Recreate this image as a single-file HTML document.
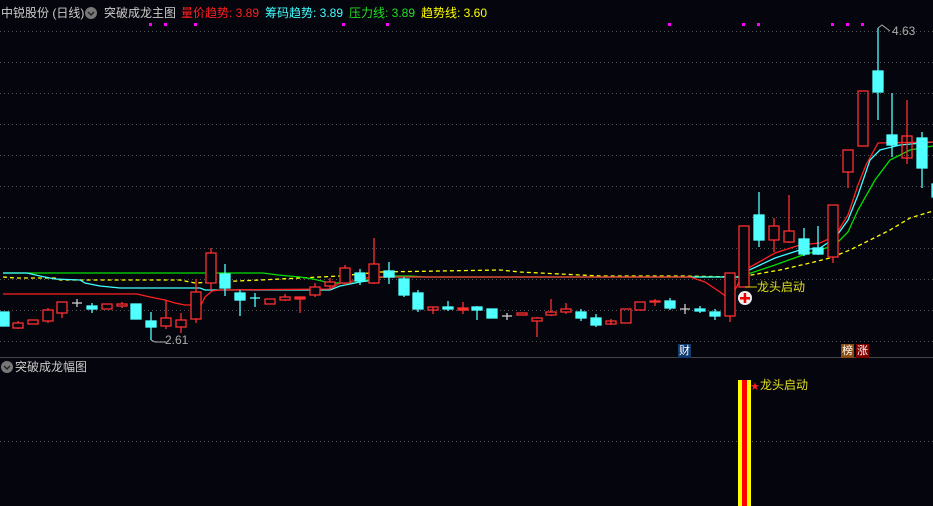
<!DOCTYPE html>
<html><head><meta charset="utf-8"><style>
html,body{margin:0;padding:0;background:#05050d;width:933px;height:506px;overflow:hidden}
.t{position:absolute;font-family:"Liberation Sans","Noto Sans CJK SC",sans-serif;font-size:12px;white-space:nowrap;line-height:14px}
</style></head><body>
<svg width="933" height="506" style="position:absolute;left:0;top:0" xmlns="http://www.w3.org/2000/svg">
<g stroke="#555" stroke-dasharray="1,3" stroke-width="1">
<line x1="0" y1="31.5" x2="933" y2="31.5"/><line x1="0" y1="62.5" x2="933" y2="62.5"/><line x1="0" y1="93.5" x2="933" y2="93.5"/>
<line x1="0" y1="124.5" x2="933" y2="124.5"/><line x1="0" y1="155.5" x2="933" y2="155.5"/><line x1="0" y1="186.5" x2="933" y2="186.5"/>
<line x1="0" y1="217.5" x2="933" y2="217.5"/><line x1="0" y1="248.5" x2="933" y2="248.5"/><line x1="0" y1="279.5" x2="933" y2="279.5"/>
<line x1="0" y1="310.5" x2="933" y2="310.5"/><line x1="0" y1="341.5" x2="933" y2="341.5"/><line x1="0" y1="441.5" x2="933" y2="441.5"/>
</g>
<line x1="0" y1="357.5" x2="933" y2="357.5" stroke="#444"/>
<g fill="#f0f">
<rect x="149" y="23" width="3" height="3"/><rect x="164" y="23" width="3" height="3"/><rect x="194" y="23" width="3" height="3"/><rect x="342" y="23" width="3" height="3"/><rect x="386" y="23" width="3" height="3"/>
<rect x="668" y="23" width="3" height="3"/><rect x="742" y="23" width="3" height="3"/><rect x="757" y="23" width="3" height="3"/><rect x="831" y="23" width="3" height="3"/><rect x="846" y="23" width="3" height="3"/><rect x="861" y="23" width="3" height="3"/>
</g>
<!-- lines -->
<polyline fill="none" stroke="#ffff00" stroke-width="1.3" stroke-dasharray="4,3" points="3,277 15,278 55,278 60,280 180,280 195,283 215,282 260,280 300,278 340,276 380,272 440,271 500,270 520,272 540,273 580,275 600,276 680,276 740,277 780,270 810,263 830,258 850,250 870,240 890,230 910,218 933,211"/>
<polyline fill="none" stroke="#00e000" stroke-width="1.3" points="3,273 263,273 278,275 300,277 313,279 330,283 355,283 375,278 395,276 410,276 425,277 740,277 745,275 775,265 800,256 820,250 835,245 848,232 858,210 875,180 890,160 910,150 933,146"/>
<polyline fill="none" stroke="#40ffff" stroke-width="1.3" points="3,273 27,273 40,276 55,279 80,280 85,283 100,286 120,288 200,288 205,290 330,290 340,286 360,282 375,280 380,277 425,277 740,277 745,272 775,258 800,250 820,248 835,238 848,220 858,195 870,160 880,150 900,145 933,142"/>
<polyline fill="none" stroke="#ff2020" stroke-width="1.3" points="3,294 137,294 150,297 165,300 175,303 185,305 195,305 200,307 205,297 212,291 220,290 330,289 340,283 360,280 370,277 395,277 690,277 705,282 720,292 728,298 735,290 745,270 775,253 800,245 820,243 835,236 848,215 858,185 866,165 878,143 933,142"/>
<!-- candles -->
<g stroke-width="1.3">
<g fill="#50ffff" stroke="#50ffff">
<rect x="0" y="312" width="9" height="14"/>
<line x1="77" y1="299" x2="77" y2="307" stroke="#ccc"/><line x1="72" y1="303" x2="82" y2="303" stroke="#ccc"/>
<rect x="87" y="306" width="10" height="3"/><line x1="92" y1="303" x2="92" y2="313"/>
<rect x="131" y="304" width="10" height="15"/>
<line x1="151" y1="312" x2="151" y2="340"/><rect x="146" y="321" width="10" height="6"/>
<line x1="225" y1="264" x2="225" y2="296"/><rect x="220" y="274" width="10" height="14"/>
<line x1="240" y1="290" x2="240" y2="316"/><rect x="235" y="293" width="10" height="7"/>
<line x1="255" y1="293" x2="255" y2="307"/><line x1="250" y1="298" x2="260" y2="298"/>
<line x1="360" y1="269" x2="360" y2="285"/><rect x="355" y="273" width="10" height="8"/>
<line x1="389" y1="262" x2="389" y2="284"/><rect x="384" y="271" width="10" height="6"/>
<line x1="404" y1="277" x2="404" y2="297"/><rect x="399" y="279" width="10" height="16"/>
<line x1="418" y1="290" x2="418" y2="312"/><rect x="413" y="293" width="10" height="16"/>
<line x1="448" y1="301" x2="448" y2="311"/><rect x="443" y="307" width="10" height="2"/>
<line x1="477" y1="306" x2="477" y2="320"/><rect x="472" y="307" width="10" height="3"/>
<rect x="487" y="309" width="10" height="9"/>
<line x1="507" y1="313" x2="507" y2="320" stroke="#ccc"/><line x1="502" y1="316" x2="512" y2="316" stroke="#ccc"/>
<line x1="581" y1="309" x2="581" y2="321"/><rect x="576" y="312" width="10" height="6"/>
<line x1="596" y1="314" x2="596" y2="327"/><rect x="591" y="318" width="10" height="7"/>
<line x1="670" y1="298" x2="670" y2="310"/><rect x="665" y="301" width="10" height="7"/>
<line x1="685" y1="304" x2="685" y2="314" stroke="#ccc"/><line x1="680" y1="309" x2="690" y2="309" stroke="#ccc"/>
<line x1="700" y1="306" x2="700" y2="313"/><rect x="695" y="309" width="10" height="2"/>
<line x1="715" y1="309" x2="715" y2="320"/><rect x="710" y="312" width="10" height="4"/>
<line x1="759" y1="192" x2="759" y2="247"/><rect x="754" y="215" width="10" height="25"/>
<line x1="804" y1="228" x2="804" y2="256"/><rect x="799" y="239" width="10" height="15"/>
<line x1="818" y1="226" x2="818" y2="255"/><rect x="813" y="248" width="10" height="6"/>
<line x1="878" y1="28" x2="878" y2="120"/><rect x="873" y="71" width="10" height="21"/>
<line x1="892" y1="93" x2="892" y2="157"/><rect x="887" y="135" width="10" height="10"/>
<line x1="922" y1="132" x2="922" y2="188"/><rect x="917" y="138" width="10" height="30"/>
<rect x="932" y="184" width="3" height="13"/>
</g>
<g fill="none" stroke="#ff3030">
<line x1="18" y1="321" x2="18" y2="329"/><rect x="13" y="323" width="10" height="5" fill="#05050d"/>
<rect x="28" y="320" width="10" height="4"/>
<line x1="48" y1="308" x2="48" y2="323"/><rect x="43" y="310" width="10" height="11" fill="#05050d"/>
<line x1="62" y1="302" x2="62" y2="318"/><rect x="57" y="302" width="10" height="11" fill="#05050d"/>
<rect x="102" y="304" width="10" height="5"/>
<line x1="122" y1="302" x2="122" y2="308"/><rect x="117" y="304" width="10" height="2" fill="#05050d"/>
<line x1="166" y1="300" x2="166" y2="329"/><rect x="161" y="318" width="10" height="8" fill="#05050d"/>
<line x1="181" y1="313" x2="181" y2="333"/><rect x="176" y="320" width="10" height="7" fill="#05050d"/>
<line x1="196" y1="279" x2="196" y2="323"/><rect x="191" y="292" width="10" height="27" fill="#05050d"/>
<line x1="211" y1="248" x2="211" y2="290"/><rect x="206" y="253" width="10" height="30" fill="#05050d"/>
<rect x="265" y="299" width="10" height="5"/>
<line x1="285" y1="294" x2="285" y2="301"/><rect x="280" y="297" width="10" height="3" fill="#05050d"/>
<line x1="300" y1="297" x2="300" y2="313"/><rect x="295" y="297" width="10" height="2" fill="#ff3030"/>
<line x1="315" y1="283" x2="315" y2="297"/><rect x="310" y="287" width="10" height="8" fill="#05050d"/>
<line x1="330" y1="278" x2="330" y2="289"/><rect x="325" y="282" width="10" height="4" fill="#05050d"/>
<line x1="345" y1="265" x2="345" y2="285"/><rect x="340" y="268" width="10" height="15" fill="#05050d"/>
<line x1="374" y1="238" x2="374" y2="284"/><rect x="369" y="264" width="10" height="19" fill="#05050d"/>
<line x1="433" y1="307" x2="433" y2="314"/><rect x="428" y="307" width="10" height="3"/>
<line x1="463" y1="302" x2="463" y2="314"/><rect x="458" y="308" width="10" height="2" fill="#ff3030"/>
<rect x="517" y="313" width="10" height="2"/>
<line x1="537" y1="317" x2="537" y2="337"/><rect x="532" y="318" width="10" height="3" fill="#05050d"/>
<line x1="551" y1="299" x2="551" y2="316"/><rect x="546" y="312" width="10" height="3" fill="#05050d"/>
<line x1="566" y1="303" x2="566" y2="314"/><rect x="561" y="309" width="10" height="3" fill="#05050d"/>
<line x1="611" y1="319" x2="611" y2="325"/><rect x="606" y="321" width="10" height="3"/>
<rect x="621" y="309" width="10" height="14"/>
<rect x="635" y="302" width="10" height="8"/>
<line x1="655" y1="299" x2="655" y2="306"/><rect x="650" y="301" width="10" height="1" fill="#ff3030"/>
<line x1="730" y1="310" x2="730" y2="322"/><rect x="725" y="273" width="10" height="43" fill="#05050d"/>
<rect x="739" y="226" width="10" height="61" fill="#05050d"/>
<line x1="774" y1="218" x2="774" y2="252"/><rect x="769" y="226" width="10" height="14" fill="#05050d"/>
<line x1="789" y1="195" x2="789" y2="243"/><rect x="784" y="231" width="10" height="11" fill="#05050d"/>
<line x1="833" y1="257" x2="833" y2="263"/><rect x="828" y="205" width="10" height="52" fill="#05050d"/>
<line x1="848" y1="172" x2="848" y2="188"/><rect x="843" y="150" width="10" height="22" fill="#05050d"/>
<rect x="858" y="91" width="10" height="55"/>
<line x1="907" y1="100" x2="907" y2="164"/><rect x="902" y="136" width="10" height="22" fill="none"/>
</g>
</g>
<!-- 4.63 / 2.61 markers -->
<polyline points="878,28 882,25 890,31" fill="none" stroke="#aaa"/>
<polyline points="151,340 155,342 166,342" fill="none" stroke="#aaa"/>
<!-- plus marker -->
<circle cx="745" cy="298" r="7" fill="#eee"/>
<rect x="740" y="297" width="10" height="2.5" fill="#e00"/><rect x="743.7" y="293" width="2.5" height="10" fill="#e00"/>
<line x1="745" y1="287" x2="757" y2="287" stroke="#cc0"/>
<!-- bottom bars -->
<rect x="738" y="380" width="4" height="126" fill="#ffff00"/>
<rect x="742" y="380" width="5" height="126" fill="#ff0000"/>
<rect x="747" y="380" width="4" height="126" fill="#ffff00"/>
<text x="750" y="390" fill="#ff2020" font-size="11" font-family="DejaVu Sans">★</text>
<circle cx="91" cy="13" r="6" fill="#777"/><polyline points="88,12 91,15 94,12" fill="none" stroke="#222" stroke-width="1.5"/>
<circle cx="7" cy="367" r="6" fill="#777"/><polyline points="4,366 7,369 10,366" fill="none" stroke="#222" stroke-width="1.5"/>
</svg>
<div class="t" style="left:1px;top:6px;color:#ccc">中锐股份 (日线)</div>
<div class="t" style="left:104px;top:6px;color:#ccc">突破成龙主图</div>
<div class="t" style="left:181px;top:6px;color:#ff2020">量价趋势: 3.89</div>
<div class="t" style="left:265px;top:6px;color:#40ffff">筹码趋势: 3.89</div>
<div class="t" style="left:349px;top:6px;color:#20e020">压力线: 3.89</div>
<div class="t" style="left:421px;top:6px;color:#ffff00">趋势线: 3.60</div>
<div class="t" style="left:892px;top:24px;color:#aaa">4.63</div>
<div class="t" style="left:165px;top:333px;color:#aaa">2.61</div>
<div class="t" style="left:757px;top:280px;color:#e0e020">龙头启动</div>
<div class="t" style="left:760px;top:378px;color:#e0e020">龙头启动</div>
<div class="t" style="left:15px;top:360px;color:#ccc">突破成龙幅图</div>
<div class="t" style="left:678px;top:344px;color:#fff;background:#103a70;font-size:11px;padding:0 1px">财</div>
<div class="t" style="left:841px;top:344px;color:#fff;background:#8a4a10;font-size:11px;padding:0 1px">榜</div>
<div class="t" style="left:856px;top:344px;color:#fff;background:#800000;font-size:11px;padding:0 1px">涨</div>
</body></html>
